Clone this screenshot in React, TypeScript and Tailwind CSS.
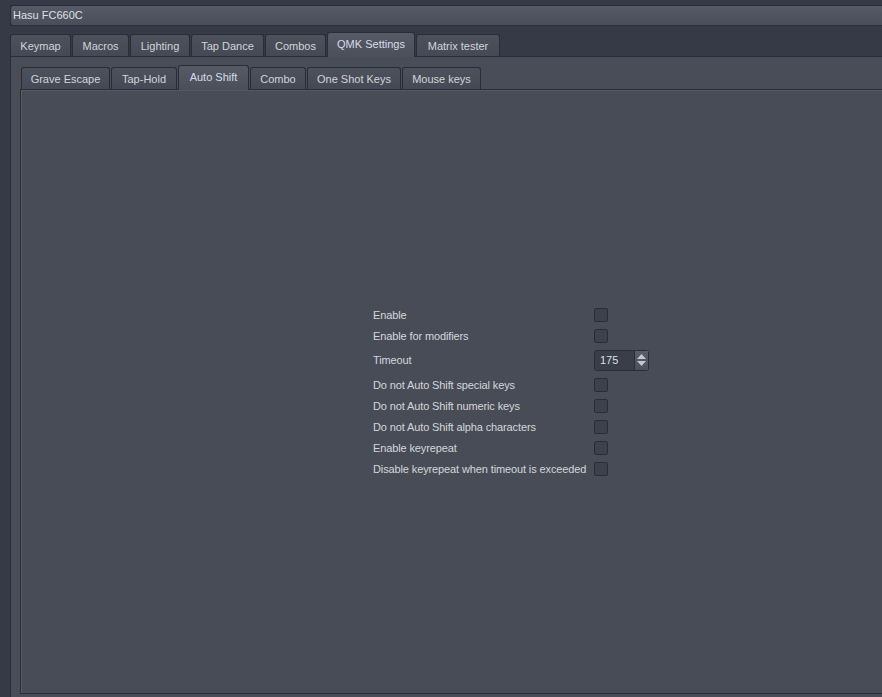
import React from 'react';

const outerTabs = [
  { label: 'Keymap', w: 'w-[61px]' },
  { label: 'Macros', w: 'w-[57px]' },
  { label: 'Lighting', w: 'w-[60px]' },
  { label: 'Tap Dance', w: 'w-[73px]' },
  { label: 'Combos', w: 'w-[61px]' },
  { label: 'QMK Settings', w: 'w-[88px]', active: true },
  { label: 'Matrix tester', w: 'w-[84px]' },
];

const innerTabs = [
  { label: 'Grave Escape', w: 'w-[89px]' },
  { label: 'Tap-Hold', w: 'w-[66px]' },
  { label: 'Auto Shift', w: 'w-[71px]', active: true },
  { label: 'Combo', w: 'w-[56px]' },
  { label: 'One Shot Keys', w: 'w-[94px]' },
  { label: 'Mouse keys', w: 'w-[79px]' },
];

const options = [
  'Enable',
  'Enable for modifiers',
  'Timeout',
  'Do not Auto Shift special keys',
  'Do not Auto Shift numeric keys',
  'Do not Auto Shift alpha characters',
  'Enable keyrepeat',
  'Disable keyrepeat when timeout is exceeded',
];

function Tab({ label, w, active }: { label: string; w: string; active?: boolean }) {
  return active ? (
    <div
      className={`${w} relative -mb-px flex h-[25px] items-center justify-center rounded-t-[3px] border border-b-0 border-[#2a2d36] bg-gradient-to-b from-[#555a66] to-[#4b4f5a] pb-[1px] text-[#d6dcea]`}
    >
      {label}
    </div>
  ) : (
    <div
      className={`${w} flex h-[22px] items-center justify-center rounded-t-[3px] border border-b-0 border-[#2a2d36] bg-gradient-to-b from-[#4d515c] to-[#454955] pt-[1px] text-[#d2d4d8]`}
    >
      {label}
    </div>
  );
}

function Checkbox() {
  return <div className="h-[14px] w-[14px] rounded-[2px] border border-[#2a2d36] bg-[#3d414c]" />;
}

function SpinBox() {
  return (
    <div className="flex h-[21px] w-[55px] rounded-[3px] border border-[#2a2d36] bg-[#3a3e49]">
      <div className="flex flex-1 items-center pl-[5px] text-[#dcdee2]">175</div>
      <div className="flex w-[14px] flex-col items-center justify-center gap-[2px] border-l border-[#2a2d36] bg-gradient-to-b from-[#5a5e69] to-[#4c505b]">
        <svg width="9" height="5" viewBox="0 0 9 5">
          <path d="M0 5 L4.5 0 L9 5 Z" fill="#c4c7cd" />
        </svg>
        <svg width="9" height="5" viewBox="0 0 9 5">
          <path d="M0 0 L4.5 5 L9 0 Z" fill="#c4c7cd" />
        </svg>
      </div>
    </div>
  );
}

export default function App() {
  return (
    <div className="flex h-[697px] w-[882px] flex-col overflow-hidden bg-[#363a46] pl-[10px] pt-[5px] font-['Liberation_Sans',Arial,sans-serif] text-[11px] text-[#d4d6da]">
      <div className="flex h-[21px] items-center rounded-l-[3px] border border-r-0 border-[#2a2d36] bg-gradient-to-b from-[#555a66] to-[#4a4e5a] pl-[2px] text-[#dde0e4]">
        Hasu FC660C
      </div>

      <div className="mt-[8px] flex h-[22px] items-end gap-[1px]">
        {outerTabs.map((t) => (
          <Tab key={t.label} {...t} />
        ))}
      </div>

      <div className="flex flex-1 flex-col border-l border-t border-[#2a2d36] bg-[#494d58] pl-[9px] pt-[11px]">
        <div className="flex h-[21px] items-end gap-[1px] pl-[1px]">
          {innerTabs.map((t) => (
            <Tab key={t.label} {...t} />
          ))}
        </div>
        <div className="mb-[3px] flex flex-1 items-center border-y border-l border-[#2a2d36] bg-[#484c57] pl-[352px] shadow-[inset_1px_1px_0_#555965]">
          <div className="grid grid-cols-[221px_auto] items-center gap-y-[7px]">
            {options.map((o) => (
              <React.Fragment key={o}>
                <div className="whitespace-nowrap leading-[14px] tracking-[-0.12px]">{o}</div>
                {o === 'Timeout' ? <SpinBox /> : <Checkbox />}
              </React.Fragment>
            ))}
          </div>
        </div>
      </div>
    </div>
  );
}
